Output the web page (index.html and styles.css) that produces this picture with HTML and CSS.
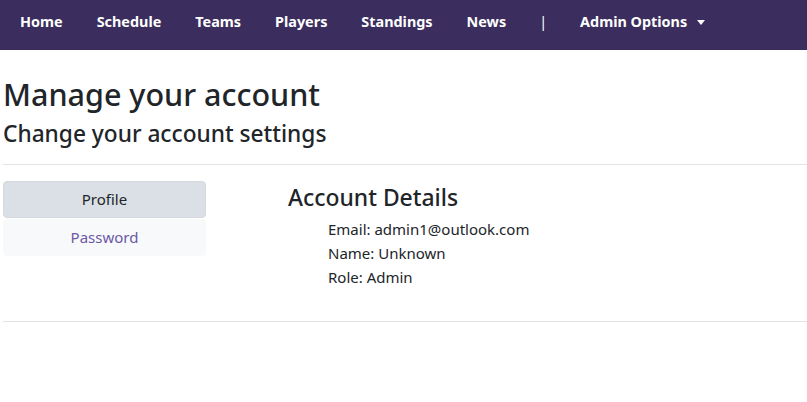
FILE: index.html
```html
<!DOCTYPE html>
<html lang="en">
<head>
<meta charset="utf-8">
<title>Manage your account</title>
<link rel="stylesheet" href="styles.css">
</head>
<body>
<nav class="navbar">
  <ul class="nav-list">
    <li><a class="nav-link" href="#">Home</a></li>
    <li><a class="nav-link" href="#">Schedule</a></li>
    <li><a class="nav-link" href="#">Teams</a></li>
    <li><a class="nav-link" href="#">Players</a></li>
    <li><a class="nav-link" href="#">Standings</a></li>
    <li><a class="nav-link" href="#">News</a></li>
    <li><span class="nav-link nav-sep">|</span></li>
    <li><a class="nav-link dropdown" href="#">Admin Options<span class="caret"></span></a></li>
  </ul>
</nav>
<main class="page">
  <h1 class="title">Manage your account</h1>
  <h2 class="subtitle">Change your account settings</h2>
  <hr class="rule">
  <div class="content">
    <div class="side-nav">
      <a class="pill active" href="#">Profile</a>
      <a class="pill" href="#">Password</a>
    </div>
    <section class="details">
      <h4 class="details-title">Account Details</h4>
      <ul class="details-list">
        <li>Email: admin1@outlook.com</li>
        <li>Name: Unknown</li>
        <li>Role: Admin</li>
      </ul>
    </section>
  </div>
  <hr class="rule rule-bottom">
</main>
</body>
</html>
```
FILE: styles.css
```css
* { box-sizing: border-box; }
body {
  margin: 0;
  font-family: "Noto Sans", "Open Sans", sans-serif;
  font-size: 15px;
  color: #212529;
  background: #fff;
}
.navbar {
  background: #3b2e5e;
  height: 50px;
  padding: 0 3px;
  display: flex;
  align-items: flex-start;
}
.nav-list {
  list-style: none;
  margin: 0;
  padding: 0;
  display: flex;
  align-items: center;
}
.nav-link {
  display: block;
  color: #fff;
  font-weight: 700;
  font-size: 14.4px;
  text-decoration: none;
  padding: 0 17px;
  line-height: 44px;
}
.nav-sep { font-weight: 400; padding: 0 16px; }
.dropdown { display: flex; align-items: center; }
.caret {
  display: inline-block;
  margin-left: 10px;
  width: 0;
  height: 0;
  border-left: 4.5px solid transparent;
  border-right: 4.5px solid transparent;
  border-top: 5px solid #fff;
}
.page { padding: 0 0 0 3px; }
.title {
  font-size: 30.5px;
  font-weight: 500;
  line-height: 38px;
  margin: 25px 0 0;
}
.subtitle {
  font-size: 22.7px;
  font-weight: 500;
  line-height: 26px;
  margin: 8px 0 0;
}
.rule {
  border: 0;
  border-top: 1px solid #e3e3e3;
  margin: 17px 0 16px;
}
.content {
  display: grid;
  grid-template-columns: 203px 1fr;
  column-gap: 82px;
}
.side-nav { display: flex; flex-direction: column; gap: 1px; }
.pill {
  display: block;
  height: 37px;
  line-height: 37px;
  text-align: center;
  background: #f8f9fa;
  color: #6b58a6;
  text-decoration: none;
  border-radius: 4px;
}
.pill.active {
  background: #dae0e5;
  color: #212529;
  border: 1px solid #d3d9df;
  line-height: 35px;
}
.details-title {
  font-size: 22.9px;
  font-weight: 500;
  line-height: 29px;
  margin: 2px 0 5px;
}
.details-list {
  list-style: none;
  margin: 0;
  padding-left: 40px;
  line-height: 24px;
}
.rule-bottom { margin-top: 32px; }
```
